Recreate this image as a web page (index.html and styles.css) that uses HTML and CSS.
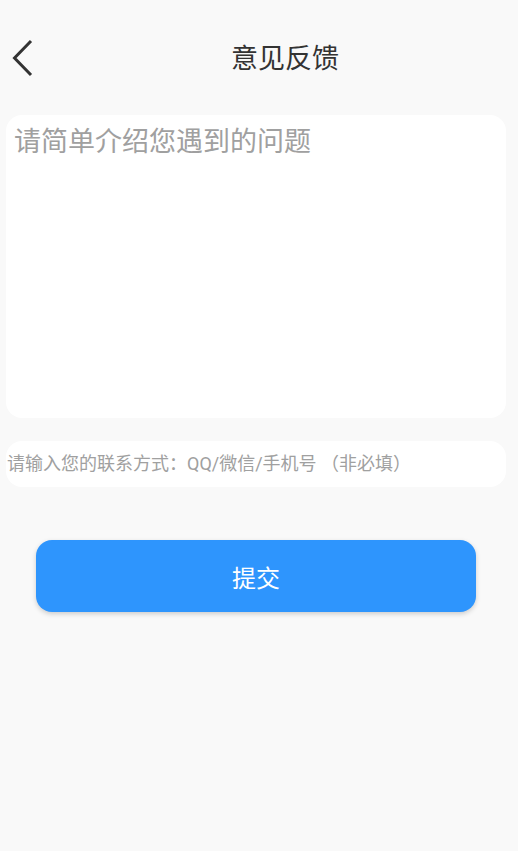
FILE: index.html
```html
<!DOCTYPE html>
<html lang="zh-CN">
<head>
<meta charset="utf-8">
<title>意见反馈</title>
<link rel="stylesheet" href="styles.css">
</head>
<body>
<header class="topbar">
  <div class="back">
    <svg class="back-icon" width="22" height="38" viewBox="0 0 22 38">
      <path d="M19 2 L2.5 19 L19 36" fill="none" stroke="#333" stroke-width="3"/>
    </svg>
  </div>
  <h1 class="title">意见反馈</h1>
</header>
<main class="content">
  <div class="feedback-box">
    <div class="placeholder-lg">请简单介绍您遇到的问题</div>
  </div>
  <div class="contact-box">
    <div class="placeholder-sm">请输入您的联系方式：QQ/微信/手机号 （非必填）</div>
  </div>
  <button class="submit">提交</button>
</main>
</body>
</html>
```
FILE: styles.css
```css
html, body {
  margin: 0;
  padding: 0;
}
body {
  background: #f9f9f9;
  font-family: Roboto, "Noto Sans CJK SC", sans-serif;
  width: 518px;
  min-height: 851px;
}
.topbar {
  height: 115px;
  display: flex;
  align-items: center;
}
.back {
  width: 52px;
  display: flex;
  align-items: center;
  padding-left: 12px;
  box-sizing: border-box;
}
.back-icon {
  display: block;
}
.title {
  flex: 1;
  margin: 0;
  padding-top: 3px;
  text-align: center;
  font-size: 27px;
  font-weight: 400;
  color: #333;
  line-height: 30px;
}
.content {
  padding: 0 12px 0 6px;
  display: flex;
  flex-direction: column;
}
.feedback-box {
  height: 303px;
  background: #fff;
  border-radius: 16px;
  padding: 9px 8px;
  box-sizing: border-box;
}
.placeholder-lg {
  font-size: 27px;
  line-height: 36px;
  color: #a0a0a0;
}
.contact-box {
  margin-top: 23px;
  height: 46px;
  background: #fff;
  border-radius: 16px;
  display: flex;
  align-items: center;
  padding-left: 1px;
}
.placeholder-sm {
  font-size: 18px;
  line-height: 20px;
  color: #a0a0a0;
}
.submit {
  margin: 53px 30px 0 30px;
  height: 72px;
  border: none;
  border-radius: 16px;
  background: #2e95fd;
  color: #fff;
  font-family: Roboto, "Noto Sans CJK SC", sans-serif;
  font-size: 24px;
  box-shadow: 0 2px 5px rgba(0, 0, 0, 0.18);
  padding: 0;
}
```
